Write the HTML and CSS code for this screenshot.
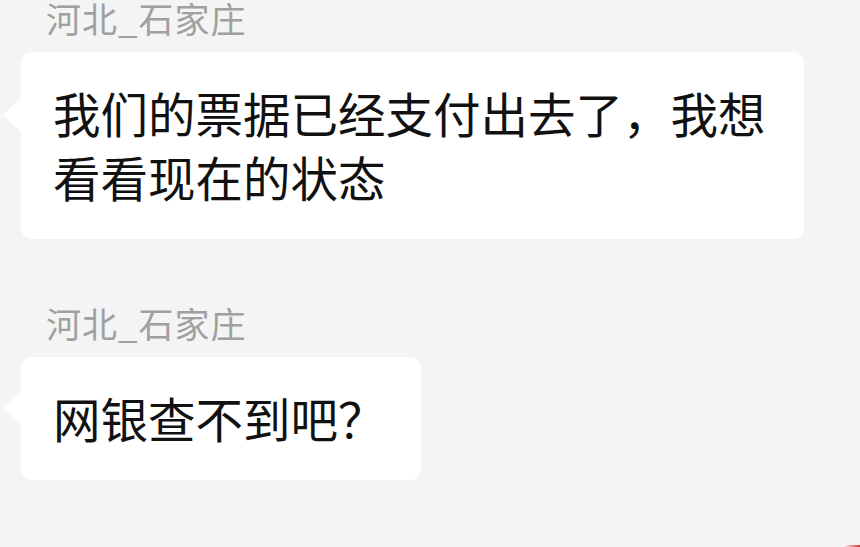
FILE: index.html
```html
<!DOCTYPE html>
<html lang="zh-CN">
<head>
  <meta charset="UTF-8">
  <title>聊天记录</title>
  <link rel="stylesheet" href="styles.css">
</head>
<body>
  <div class="chat">
    <div class="msg">
      <div class="sender">河北_石家庄</div>
      <div class="bubble">我们的票据已经支付出去了，我想看看现在的状态</div>
    </div>

    <div class="msg">
      <div class="sender">河北_石家庄</div>
      <div class="bubble short">网银查不到吧？</div>
    </div>
  </div>
  <div class="corner-mark"></div>
</body>
</html>
```

FILE: styles.css
```css
body {
  margin: 0;
  background-color: #f4f4f4;
  font-family: "Noto Sans CJK SC", "Noto Sans", sans-serif;
  height: 547px;
  overflow: hidden;
  position: relative;
}

.chat {
  display: flex;
  flex-direction: column;
  gap: 66px;
  padding: 0 0 0 21px;
}

.msg {
  display: flex;
  flex-direction: column;
  align-items: flex-start;
  gap: 16px;
}

.sender {
  margin-left: 25px;
  font-size: 35px;
  line-height: 36px;
  letter-spacing: 1px;
  color: #a0a0a0;
}

.bubble {
  position: relative;
  max-width: 783px;
  box-sizing: border-box;
  padding: 29px 35px 30px 32px;
  background-color: #fff;
  border-radius: 11px;
  font-size: 47.5px;
  line-height: 64px;
  color: #111;
}

/* little pointer on the left side */
.bubble::before {
  content: "";
  position: absolute;
  left: -18px;
  top: 46px;
  border-style: solid;
  border-width: 17px 18px 17px 0;
  border-color: transparent #fff transparent transparent;
}

.bubble.short::before {
  top: 34px;
}

.corner-mark {
  position: absolute;
  right: 0;
  bottom: 0;
  width: 16px;
  height: 2px;
  background: linear-gradient(to right, rgba(214, 60, 50, 0), #d63c32);
}
```
